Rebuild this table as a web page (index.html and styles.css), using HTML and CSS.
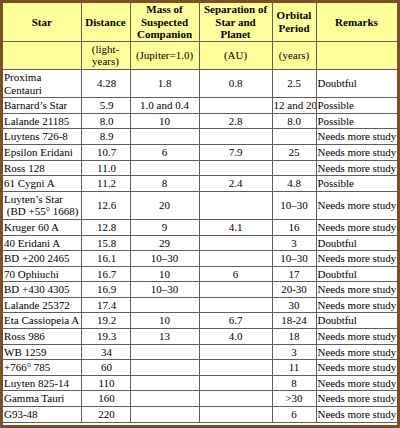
FILE: index.html
```html
<!DOCTYPE html>
<html>
<head>
<meta charset="utf-8">
<link rel="stylesheet" href="styles.css">
</head>
<body>
<div class="frame">
<table class="stars">
<colgroup>
<col class="c1"><col class="c2"><col class="c3"><col class="c4"><col class="c5"><col class="c6">
</colgroup>
<thead>
<tr class="head">
<th>Star</th><th>Distance</th><th>Mass of<br>Suspected<br>Companion</th><th>Separation of<br>Star and<br>Planet</th><th>Orbital<br>Period</th><th>Remarks</th>
</tr>
<tr class="units">
<td class="first"></td><td>(light-<br>years)</td><td>(Jupiter=1.0)</td><td>(AU)</td><td>(years)</td><td></td>
</tr>
</thead>
<tbody>
<tr><td>Proxima<br>Centauri</td><td>4.28</td><td>1.8</td><td>0.8</td><td>2.5</td><td>Doubtful</td></tr>
<tr><td>Barnard’s Star</td><td>5.9</td><td>1.0 and 0.4</td><td></td><td>12 and 20</td><td>Possible</td></tr>
<tr><td>Lalande 21185</td><td>8.0</td><td>10</td><td>2.8</td><td>8.0</td><td>Possible</td></tr>
<tr><td>Luytens 726-8</td><td>8.9</td><td></td><td></td><td></td><td>Needs more study</td></tr>
<tr><td>Epsilon Eridani</td><td>10.7</td><td>6</td><td>7.9</td><td>25</td><td>Needs more study</td></tr>
<tr><td>Ross 128</td><td>11.0</td><td></td><td></td><td></td><td>Needs more study</td></tr>
<tr><td>61 Cygni A</td><td>11.2</td><td>8</td><td>2.4</td><td>4.8</td><td>Possible</td></tr>
<tr><td>Luyten’s Star<br>&nbsp;(BD +55° 1668)</td><td>12.6</td><td>20</td><td></td><td>10–30</td><td>Needs more study</td></tr>
<tr><td>Kruger 60 A</td><td>12.8</td><td>9</td><td>4.1</td><td>16</td><td>Needs more study</td></tr>
<tr><td>40 Eridani A</td><td>15.8</td><td>29</td><td></td><td>3</td><td>Doubtful</td></tr>
<tr><td>BD +200 2465</td><td>16.1</td><td>10–30</td><td></td><td>10–30</td><td>Needs more study</td></tr>
<tr><td>70 Ophiuchi</td><td>16.7</td><td>10</td><td>6</td><td>17</td><td>Doubtful</td></tr>
<tr><td>BD +430 4305</td><td>16.9</td><td>10–30</td><td></td><td>20-30</td><td>Needs more study</td></tr>
<tr><td>Lalande 25372</td><td>17.4</td><td></td><td></td><td>30</td><td>Needs more study</td></tr>
<tr><td>Eta Cassiopeia A</td><td>19.2</td><td>10</td><td>6.7</td><td>18-24</td><td>Doubtful</td></tr>
<tr><td>Ross 986</td><td>19.3</td><td>13</td><td>4.0</td><td>18</td><td>Needs more study</td></tr>
<tr><td>WB 1259</td><td>34</td><td></td><td></td><td>3</td><td>Needs more study</td></tr>
<tr><td>+766° 785</td><td>60</td><td></td><td></td><td>11</td><td>Needs more study</td></tr>
<tr><td>Luyten 825-14</td><td>110</td><td></td><td></td><td>8</td><td>Needs more study</td></tr>
<tr><td>Gamma Tauri</td><td>160</td><td></td><td></td><td>&gt;30</td><td>Needs more study</td></tr>
<tr><td>G93-48</td><td>220</td><td></td><td></td><td>6</td><td>Needs more study</td></tr>
</tbody>
</table>
</div>
</body>
</html>
```
FILE: styles.css
```css
html, body {
  margin: 0;
  padding: 0;
  background: #ffffff;
}
.frame {
  width: 394px;
  height: 422px;
  border: 3px solid #7d4f25;
  background: #ffffff;
  overflow: hidden;
}
.stars {
  width: 394px;
  table-layout: fixed;
  border-collapse: collapse;
  font-family: "Liberation Serif", "Times New Roman", serif;
  font-size: 11px;
  line-height: 12.6px;
  color: #000000;
}
.c1 { width: 78px; }
.c2 { width: 49px; }
.c3 { width: 69px; }
.c4 { width: 73px; }
.c5 { width: 44px; }
.c6 { width: 81px; }
.stars th,
.stars td {
  border: 1px solid #5e5e5e;
  padding: 1px 1px;
  vertical-align: middle;
  text-align: center;
  white-space: nowrap;
  overflow: hidden;
}
.stars tr > :first-child {
  border-left: none;
  text-align: left;
}
.stars thead tr.head > * {
  border-top: none;
}
.stars tr.head th {
  background: #ffff99;
  font-weight: bold;
  text-align: center;
  padding: 0 1px;
}
.stars tr.units td {
  background: #ffff99;
}
.stars tbody td:last-child {
  text-align: left;
  padding: 1px 0 1px 1px;
  overflow: visible;
  letter-spacing: -0.05px;
}
.stars tbody td:nth-child(2) {
  padding-left: 3px;
}
```
